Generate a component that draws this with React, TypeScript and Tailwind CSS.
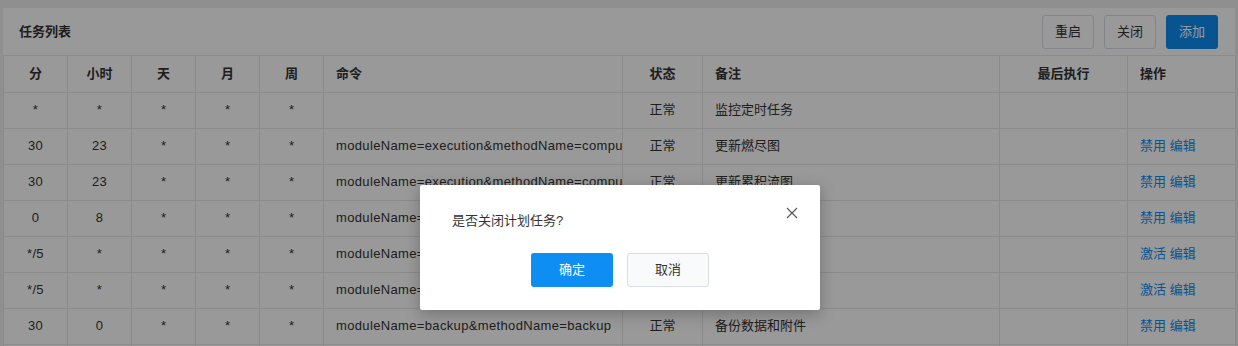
import React from "react";

type Row = {
  m: string;
  h: string;
  d: string;
  mo: string;
  w: string;
  cmd: string;
  status: string;
  remark: string;
  last: string;
  action: string | null;
};

const rows: Row[] = [
  { m: "*", h: "*", d: "*", mo: "*", w: "*", cmd: "", status: "正常", remark: "监控定时任务", last: "", action: null },
  { m: "30", h: "23", d: "*", mo: "*", w: "*", cmd: "moduleName=execution&methodName=computeBurn", status: "正常", remark: "更新燃尽图", last: "", action: "禁用" },
  { m: "30", h: "23", d: "*", mo: "*", w: "*", cmd: "moduleName=execution&methodName=computeCFD", status: "正常", remark: "更新累积流图", last: "", action: "禁用" },
  { m: "0", h: "8", d: "*", mo: "*", w: "*", cmd: "moduleName=report&methodName=remind", status: "正常", remark: "定时发送提醒", last: "", action: "禁用" },
  { m: "*/5", h: "*", d: "*", mo: "*", w: "*", cmd: "moduleName=svn&methodName=run", status: "暂停", remark: "同步SVN", last: "", action: "激活" },
  { m: "*/5", h: "*", d: "*", mo: "*", w: "*", cmd: "moduleName=git&methodName=run", status: "暂停", remark: "同步GIT", last: "", action: "激活" },
  { m: "30", h: "0", d: "*", mo: "*", w: "*", cmd: "moduleName=backup&methodName=backup", status: "正常", remark: "备份数据和附件", last: "", action: "禁用" },
  { m: "*/5", h: "*", d: "*", mo: "*", w: "*", cmd: "moduleName=mail&methodName=asyncSend", status: "正常", remark: "异步发信", last: "", action: "禁用" },
];

const font = { fontFamily: '"Liberation Sans", "Noto Sans CJK SC", sans-serif' };

export default function App() {
  return (
    <div className="relative h-[346px] w-[1238px] overflow-hidden bg-[#eeeeee] text-[13px] text-[#333]" style={font}>
      <div className="px-[3px] pt-2">
        <div className="bg-white">
          <div className="flex h-[48px] items-center justify-between border-b border-[#e8e8e8] pl-4 pr-[17px]">
            <div className="font-bold text-[#333]">任务列表</div>
            <div className="flex gap-[10px]">
              <button className="h-[34px] w-[52px] rounded-[3px] border border-[#d9dde5] bg-white text-[#333]">重启</button>
              <button className="h-[34px] w-[52px] rounded-[3px] border border-[#d9dde5] bg-white text-[#333]">关闭</button>
              <button className="h-[34px] w-[52px] rounded-[3px] bg-[#0e8df2] text-white">添加</button>
            </div>
          </div>
          <table className="w-[1232px] table-fixed border-collapse">
            <colgroup>
              <col className="w-[64px]" />
              <col className="w-[64px]" />
              <col className="w-[64px]" />
              <col className="w-[64px]" />
              <col className="w-[64px]" />
              <col className="w-[299px]" />
              <col className="w-[80px]" />
              <col className="w-[297px]" />
              <col className="w-[128px]" />
              <col className="w-[108px]" />
            </colgroup>
            <thead>
              <tr className="h-[36px] font-bold">
                <th className="border border-t-0 border-[#e8e8e8] text-center">分</th>
                <th className="border border-t-0 border-[#e8e8e8] text-center">小时</th>
                <th className="border border-t-0 border-[#e8e8e8] text-center">天</th>
                <th className="border border-t-0 border-[#e8e8e8] text-center">月</th>
                <th className="border border-t-0 border-[#e8e8e8] text-center">周</th>
                <th className="border border-t-0 border-[#e8e8e8] pl-3 text-left">命令</th>
                <th className="border border-t-0 border-[#e8e8e8] text-center">状态</th>
                <th className="border border-t-0 border-[#e8e8e8] pl-3 text-left">备注</th>
                <th className="border border-t-0 border-[#e8e8e8] text-center">最后执行</th>
                <th className="border border-t-0 border-[#e8e8e8] pl-3 text-left">操作</th>
              </tr>
            </thead>
            <tbody>
              {rows.map((r, i) => (
                <tr key={i} className="h-[36px]">
                  <td className="border border-[#e8e8e8] text-center tracking-[0.3px]">{r.m}</td>
                  <td className="border border-[#e8e8e8] text-center tracking-[0.3px]">{r.h}</td>
                  <td className="border border-[#e8e8e8] text-center">{r.d}</td>
                  <td className="border border-[#e8e8e8] text-center">{r.mo}</td>
                  <td className="border border-[#e8e8e8] text-center">{r.w}</td>
                  <td className="overflow-hidden whitespace-nowrap border border-[#e8e8e8] pl-3 tracking-[0.35px]">{r.cmd}</td>
                  <td className="border border-[#e8e8e8] text-center">{r.status}</td>
                  <td className="border border-[#e8e8e8] pl-3">{r.remark}</td>
                  <td className="border border-[#e8e8e8] text-center">{r.last}</td>
                  <td className="border border-[#e8e8e8] pl-3 text-[#0e8df2]">
                    {r.action ? (
                      <span>
                        {r.action} 编辑
                      </span>
                    ) : null}
                  </td>
                </tr>
              ))}
            </tbody>
          </table>
        </div>
      </div>

      <div className="absolute inset-0 flex justify-center bg-black/40 pl-[2px] pt-[185px]">
        <div className="relative h-[125px] w-[400px] rounded-[2px] bg-white shadow-[0_4px_16px_rgba(0,0,0,0.25)]">
          <button className="absolute right-[22px] top-[22px] flex h-[12px] w-[12px] items-center justify-center text-[#555]">
            <svg width="12" height="12" viewBox="0 0 12 12" fill="none" stroke="currentColor" strokeWidth="1.1">
              <path d="M1 1L11 11M11 1L1 11" />
            </svg>
          </button>
          <div className="pl-8 pt-[26px] leading-[20px] text-[#333]">是否关闭计划任务?</div>
          <div className="mt-[22px] flex justify-center gap-[14px]">
            <button className="h-[34px] w-[82px] rounded-[3px] bg-[#0e8df2] text-white">确定</button>
            <button className="h-[34px] w-[82px] rounded-[3px] border border-[#d9dde5] bg-[#f8fafc] text-[#333]">取消</button>
          </div>
        </div>
      </div>
    </div>
  );
}
